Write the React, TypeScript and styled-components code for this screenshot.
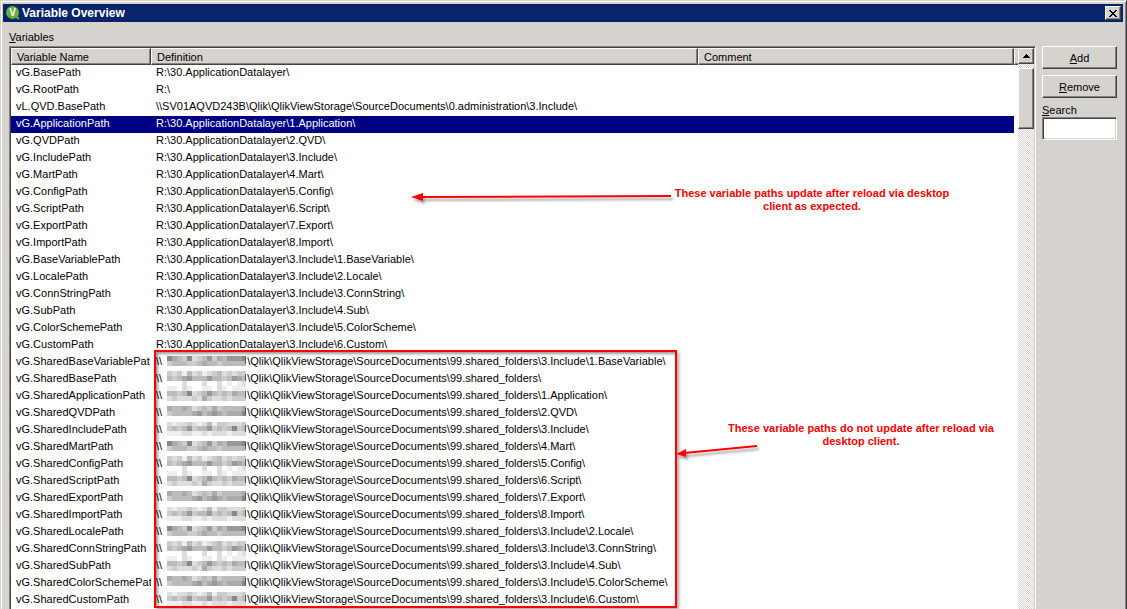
import React from "react";
import styled, { createGlobalStyle, css } from "styled-components";

const face = "#d6d3ce";
const shade = "#848284";
const dark = "#424142";

const GlobalStyle = createGlobalStyle`
  * { box-sizing: border-box; }
  body {
    margin: 0;
    background: ${face};
    color: #000;
    font-family: "Liberation Sans", Arial, sans-serif;
    font-size: 11px;
  }
`;

const raised = css`
  border: 1px solid;
  border-color: #fff ${dark} ${dark} #fff;
  box-shadow: inset -1px -1px 0 ${shade};
  background: ${face};
`;

const Window = styled.div`
  min-height: 100vh;
  display: flex;
  flex-direction: column;
  background: ${face};
  border-top: 1px solid ${face};
  border-left: 1px solid ${face};
  border-right: 1px solid ${dark};
  box-shadow: inset 1px 1px 0 #fff, inset -1px 0 0 ${shade};
`;

const TitleBar = styled.header`
  display: flex;
  align-items: center;
  gap: 2px;
  height: 18px;
  margin: 3px 3px 0 2px;
  padding: 0 2px 0 3px;
  background: #08246b;
  color: #fff;
`;

const Title = styled.h1`
  flex: 1;
  margin: 0;
  font-size: 12px;
  line-height: 18px;
  font-weight: 700;
`;

const CloseButton = styled.button`
  ${raised}
  display: flex;
  align-items: center;
  justify-content: center;
  width: 16px;
  height: 14px;
  padding: 0;
`;

const Body = styled.main`
  flex: 1;
  display: grid;
  grid-template-columns: minmax(0, 1fr) 75px;
  grid-template-rows: auto 1fr;
  column-gap: 6px;
  padding: 0 9px 0 8px;
`;

const Caption = styled.div`
  grid-column: 1 / -1;
  padding-top: 7px;
  line-height: 17px;
`;

const ListBox = styled.section`
  position: relative;
  display: flex;
  background: #fff;
  border-top: 1px solid ${shade};
  border-left: 1px solid ${shade};
  border-right: 1px solid #fff;
  box-shadow: inset 1px 1px 0 ${dark};
  padding: 1px 0 0 1px;
`;

const Table = styled.table`
  flex: 1;
  min-width: 0;
  width: 100%;
  table-layout: fixed;
  border-collapse: separate;
  border-spacing: 0;
`;

const HeadCell = styled.th`
  height: 17px;
  padding: 1px 5px 0;
  overflow: hidden;
  text-align: left;
  font-weight: 400;
  line-height: 14px;
  white-space: nowrap;
  background: ${face};
  border: 1px solid;
  border-color: #fff ${dark} ${dark} #fff;
  box-shadow: inset -1px -1px 0 ${shade};
`;

const EndCell = styled(HeadCell)`
  padding: 0;
  border-right: 0;
  box-shadow: inset 0 -1px 0 ${shade};
`;

const Row = styled.tr<{ $selected: boolean }>`
  color: ${(p) => (p.$selected ? "#fff" : "#000")};
  --row: ${(p) => (p.$selected ? "#000084" : "#fff")};
`;

const Cell = styled.td`
  height: 17px;
  padding: 0 4px 2px 5px;
  overflow: hidden;
  line-height: 15px;
  white-space: nowrap;
  background: var(--row);
`;

const Mosaic = styled.svg`
  display: inline-block;
  width: 79px;
  height: 15px;
  margin: 0 1px 0 5px;
  vertical-align: top;
  overflow: visible;
`;

const ScrollBar = styled.div`
  flex: none;
  width: 17px;
  border-right: 1px solid ${face};
  background: repeating-conic-gradient(${face} 0 25%, #fff 0 50%) 0 0 / 2px 2px;
`;

const ScrollButton = styled.button`
  ${raised}
  display: flex;
  align-items: center;
  justify-content: center;
  width: 16px;
  height: 16px;
  padding: 0;
`;

const Thumb = styled.div`
  ${raised}
  height: 61px;
  margin-top: 4px;
`;

const Side = styled.aside`
  display: flex;
  flex-direction: column;
`;

const ActionButton = styled.button`
  ${raised}
  height: 23px;
  margin-bottom: 6px;
  padding: 0;
  font: inherit;
  color: #000;
`;

const SearchLabel = styled.label`
  line-height: 13px;
`;

const SearchInput = styled.input`
  width: 100%;
  height: 23px;
  padding: 0 4px;
  border: 1px solid;
  border-color: ${shade} #fff #fff ${shade};
  box-shadow: inset 1px 1px 0 ${dark}, inset -1px -1px 0 ${face};
  background: #fff;
  font: inherit;
`;

const Frame = styled.div`
  position: absolute;
  left: 144px;
  top: 303px;
  width: 523px;
  height: 258px;
  border: 2px solid #f00;
  box-shadow: 2px 2px 3px rgba(0, 0, 0, 0.35), inset 2px 2px 3px rgba(0, 0, 0, 0.4);
`;

const Note = styled.p<{ $x: number; $y: number }>`
  position: absolute;
  left: ${(p) => p.$x}px;
  top: ${(p) => p.$y}px;
  width: 290px;
  margin: 0;
  text-align: center;
  font-weight: 700;
  line-height: 13px;
  color: #f00;
`;

const Arrow = styled.svg<{ $x: number; $y: number }>`
  position: absolute;
  left: ${(p) => p.$x}px;
  top: ${(p) => p.$y}px;
  overflow: visible;
  filter: drop-shadow(2px 3px 1px rgba(0, 0, 0, 0.35));
`;

// Grey levels of the blocks that cover the server name; the pattern repeats every five rows.
const blocks: { y: number; greys: string }[][] = [
  [
    { y: 2, greys: "8abc8dcb9cab9998" },
    { y: 7, greys: "cbbbccbabbcbbbbb" },
  ],
  [
    { y: 0, greys: "cdcebdcedcbdcdcc" },
    { y: 5, greys: "bcba9bbb9bbcb9ab" },
    { y: 10, greys: "fffdfffdffdfefed" },
    { y: 15, greys: "eefdeffeefdefeee" },
  ],
  [
    { y: -2, greys: "eefdeffeefdefeee" },
    { y: 3, greys: "bbcb8dcb9bcbcabb" },
    { y: 8, greys: "dcdddcdacddcdccc" },
  ],
  [
    { y: 1, greys: "abbabdcbcacbbbba" },
    { y: 6, greys: "cbbbba9ba9abaaa8" },
  ],
  [
    { y: -1, greys: "deddcdedbeccdddc" },
    { y: 4, greys: "cbcb9cbb9cbcb8cb" },
    { y: 9, greys: "eeeddeededddeddd" },
  ],
];

function HiddenHost({ index }: { index: number }) {
  return (
    <Mosaic viewBox="0 0 79 15" shapeRendering="crispEdges" aria-hidden="true">
      {blocks[index % blocks.length].map((line) =>
        [...line.greys].map((g, i) => (
          <rect key={`${line.y}-${i}`} x={i * 5} y={line.y} width={i === 15 ? 4 : 5} height={5} fill={`#${g}${g}${g}`} />
        ))
      )}
      <rect x={78} y={3} width={1} height={7} fill="#555" />
    </Mosaic>
  );
}

const root = "R:\\30.ApplicationDatalayer\\";
const local: [string, string][] = [
  ["vG.BasePath", root],
  ["vG.RootPath", "R:\\"],
  ["vL.QVD.BasePath", "\\\\SV01AQVD243B\\Qlik\\QlikViewStorage\\SourceDocuments\\0.administration\\3.Include\\"],
  ["vG.ApplicationPath", root + "1.Application\\"],
  ["vG.QVDPath", root + "2.QVD\\"],
  ["vG.IncludePath", root + "3.Include\\"],
  ["vG.MartPath", root + "4.Mart\\"],
  ["vG.ConfigPath", root + "5.Config\\"],
  ["vG.ScriptPath", root + "6.Script\\"],
  ["vG.ExportPath", root + "7.Export\\"],
  ["vG.ImportPath", root + "8.Import\\"],
  ["vG.BaseVariablePath", root + "3.Include\\1.BaseVariable\\"],
  ["vG.LocalePath", root + "3.Include\\2.Locale\\"],
  ["vG.ConnStringPath", root + "3.Include\\3.ConnString\\"],
  ["vG.SubPath", root + "3.Include\\4.Sub\\"],
  ["vG.ColorSchemePath", root + "3.Include\\5.ColorScheme\\"],
  ["vG.CustomPath", root + "3.Include\\6.Custom\\"],
];

const share = "\\Qlik\\QlikViewStorage\\SourceDocuments\\99.shared_folders\\";
const shared: [string, string][] = [
  ["vG.SharedBaseVariablePat", "3.Include\\1.BaseVariable\\"],
  ["vG.SharedBasePath", ""],
  ["vG.SharedApplicationPath", "1.Application\\"],
  ["vG.SharedQVDPath", "2.QVD\\"],
  ["vG.SharedIncludePath", "3.Include\\"],
  ["vG.SharedMartPath", "4.Mart\\"],
  ["vG.SharedConfigPath", "5.Config\\"],
  ["vG.SharedScriptPath", "6.Script\\"],
  ["vG.SharedExportPath", "7.Export\\"],
  ["vG.SharedImportPath", "8.Import\\"],
  ["vG.SharedLocalePath", "3.Include\\2.Locale\\"],
  ["vG.SharedConnStringPath", "3.Include\\3.ConnString\\"],
  ["vG.SharedSubPath", "3.Include\\4.Sub\\"],
  ["vG.SharedColorSchemePat", "3.Include\\5.ColorScheme\\"],
  ["vG.SharedCustomPath", "3.Include\\6.Custom\\"],
];

export default function App() {
  return (
    <>
      <GlobalStyle />
      <Window>
        <TitleBar>
          <svg width="14" height="14" viewBox="0 0 14 14" aria-hidden="true">
            <path d="M10 10l3 1v3l-3-2z" fill="#63b239" />
            <circle cx="6.5" cy="6.5" r="6.5" fill="#63b239" />
            <text x="6.5" y="10" textAnchor="middle" fontSize="10" fontWeight="700" fill="#fff">V</text>
          </svg>
          <Title>Variable Overview</Title>
          <CloseButton aria-label="Close">
            <svg width="8" height="7" viewBox="0 0 8 7" shapeRendering="crispEdges" aria-hidden="true">
              <path d="M0 0h2v1h1v1h2v-1h1v-1h2v1h-1v1h-1v1h-1v1h1v1h1v1h1v1h-2v-1h-1v-1h-2v1h-1v1h-2v-1h1v-1h1v-1h1v-1h-1v-1h-1v-1h-1z" fill="#000" />
            </svg>
          </CloseButton>
        </TitleBar>
        <Body>
          <Caption><u>V</u>ariables</Caption>
          <ListBox>
            <Table>
              <colgroup>
                <col style={{ width: 140 }} />
                <col style={{ width: 547 }} />
                <col />
                <col style={{ width: 4 }} />
              </colgroup>
              <thead>
                <tr>
                  <HeadCell scope="col">Variable Name</HeadCell>
                  <HeadCell scope="col">Definition</HeadCell>
                  <HeadCell scope="col">Comment</HeadCell>
                  <EndCell as="td" />
                </tr>
              </thead>
              <tbody>
                {local.map(([name, path]) => (
                  <Row key={name} $selected={name === "vG.ApplicationPath"}>
                    <Cell>{name}</Cell>
                    <Cell>{path}</Cell>
                    <Cell />
                  </Row>
                ))}
                {shared.map(([name, path], i) => (
                  <Row key={name} $selected={false}>
                    <Cell>{name}</Cell>
                    <Cell>{"\\\\"}<HiddenHost index={i} />{share + path}</Cell>
                    <Cell />
                  </Row>
                ))}
              </tbody>
            </Table>
            <ScrollBar>
              <ScrollButton aria-label="Scroll up">
                <svg width="7" height="4" viewBox="0 0 7 4" shapeRendering="crispEdges" aria-hidden="true">
                  <path d="M3 0h1v1h1v1h1v1h1v1H0V3h1V2h1V1h1z" fill="#000" />
                </svg>
              </ScrollButton>
              <Thumb />
            </ScrollBar>
            <Frame />
            <Arrow $x={401} $y={141} width="262" height="16" viewBox="0 0 262 16">
              <path d="M260 8L8 9" stroke="#f00" strokeWidth="2" />
              <path d="M0 9l12-4v8z" fill="#f00" />
            </Arrow>
            <Arrow $x={666} $y={397} width="82" height="16" viewBox="0 0 82 16">
              <path d="M81 2L8 9" stroke="#f00" strokeWidth="2" />
              <path d="M0 10l10-5v8z" fill="#f00" />
            </Arrow>
            <Note $x={657} $y={140}>These variable paths update after reload via desktop client as expected.</Note>
            <Note $x={706} $y={375}>These variable paths do not update after reload via desktop client.</Note>
          </ListBox>
          <Side>
            <ActionButton><u>A</u>dd</ActionButton>
            <ActionButton><u>R</u>emove</ActionButton>
            <SearchLabel htmlFor="search"><u>S</u>earch</SearchLabel>
            <SearchInput id="search" type="text" />
          </Side>
        </Body>
      </Window>
    </>
  );
}
